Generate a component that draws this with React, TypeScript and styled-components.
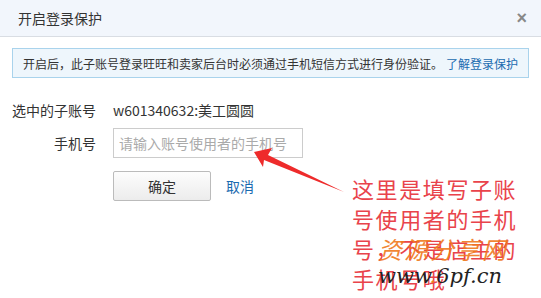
import React from 'react'
import styled, { createGlobalStyle } from 'styled-components'

const GlobalStyle = createGlobalStyle`
  html, body {
    margin: 0;
    padding: 0;
    background: #fff;
  }
  body {
    font-family: "Noto Sans CJK SC", "Liberation Sans", sans-serif;
    color: #333;
  }
`

const Dialog = styled.div`
  position: relative;
  width: 541px;
  height: 298px;
  overflow: hidden;
  background: #fff;
`

const Header = styled.div`
  display: flex;
  align-items: center;
  justify-content: space-between;
  height: 36px;
  padding: 0 14px 0 18px;
  background: #f2f6fc;
  border-bottom: 1px solid #d9dde3;
`

const Title = styled.div`
  font-size: 14px;
  color: #333;
`

const Close = styled.div`
  font-family: "Liberation Sans", sans-serif;
  font-size: 18px;
  font-weight: 700;
  color: #888;
  line-height: 1;
`

const Body = styled.div`
  padding: 11px 12px 0;
`

const Notice = styled.div`
  display: flex;
  align-items: center;
  height: 28px;
  padding: 0 10px;
  background: #eef6fc;
  border: 1px solid #a9d3ec;
  font-size: 12px;
  color: #333;
  white-space: nowrap;
`

const Link = styled.span`
  color: #1a6bb0;
  margin-left: 3px;
`

const Form = styled.div`
  display: grid;
  grid-template-columns: 84px auto;
  grid-template-rows: 22px 30px 30px;
  column-gap: 17px;
  row-gap: 7px;
  margin-top: 21px;
  align-items: center;
  font-size: 14px;
`

const Label = styled.div`
  text-align: right;
  color: #333;
  white-space: nowrap;
`

const Value = styled.div`
  color: #333;
  font-size: 14px;
`

const Input = styled.input`
  box-sizing: border-box;
  width: 190px;
  height: 30px;
  padding: 0 5px;
  border: 1px solid #ccc;
  font-family: inherit;
  font-size: 14px;
  color: #333;
  outline: none;
  &::placeholder {
    color: #aaa;
  }
`

const Actions = styled.div`
  grid-column: 2;
  display: flex;
  align-items: center;
  gap: 15px;
  margin-top: 11px;
`

const Button = styled.button`
  box-sizing: border-box;
  width: 98px;
  height: 30px;
  border: 1px solid #bbb;
  border-radius: 2px;
  background: linear-gradient(#fdfdfd, #ececec);
  font-family: inherit;
  font-size: 14px;
  color: #333;
`

const TextLink = styled.span`
  font-size: 14px;
  color: #1a6bb0;
`

const Arrow = styled.svg`
  position: absolute;
  left: 0;
  top: 0;
  pointer-events: none;
`

const Note = styled.div`
  position: absolute;
  left: 352px;
  top: 173px;
  width: 180px;
  font-size: 22px;
  line-height: 30px;
  letter-spacing: 1.6px;
  color: #e9434b;
`

const Watermark = styled.div`
  position: absolute;
  left: 378px;
  top: 234px;
  font-family: "DejaVu Serif", serif;
  font-style: italic;
  pointer-events: none;
`

const MarkTitle = styled.div`
  font-family: "Noto Sans CJK SC", sans-serif;
  font-size: 24px;
  line-height: 30px;
  letter-spacing: 2px;
  color: #f07a1c;
  opacity: 0.9;
`

const MarkUrl = styled.div`
  font-size: 21px;
  line-height: 24px;
  color: #222;
  span {
    color: #f07a1c;
  }
`

export default function App() {
  return (
    <Dialog>
      <GlobalStyle />
      <Header>
        <Title>开启登录保护</Title>
        <Close>×</Close>
      </Header>
      <Body>
        <Notice>
          开启后，此子账号登录旺旺和卖家后台时必须通过手机短信方式进行身份验证。
          <Link>了解登录保护</Link>
        </Notice>
        <Form>
          <Label>选中的子账号</Label>
          <Value>w601340632:美工圆圆</Value>
          <Label>手机号</Label>
          <Input placeholder="请输入账号使用者的手机号" />
          <Actions>
            <Button>确定</Button>
            <TextLink>取消</TextLink>
          </Actions>
        </Form>
      </Body>
      <Arrow width="541" height="298" viewBox="0 0 541 298">
        <polygon
          points="254,152 272,148 268,155 344,192 264,160 263,167"
          fill="#ee2b2b"
        />
      </Arrow>
      <Note>这里是填写子账号使用者的手机号，不是店主的手机号哦</Note>
      <Watermark>
        <MarkTitle>资源分享网</MarkTitle>
        <MarkUrl>
          www<span>.</span>6pf.cn
        </MarkUrl>
      </Watermark>
    </Dialog>
  )
}
